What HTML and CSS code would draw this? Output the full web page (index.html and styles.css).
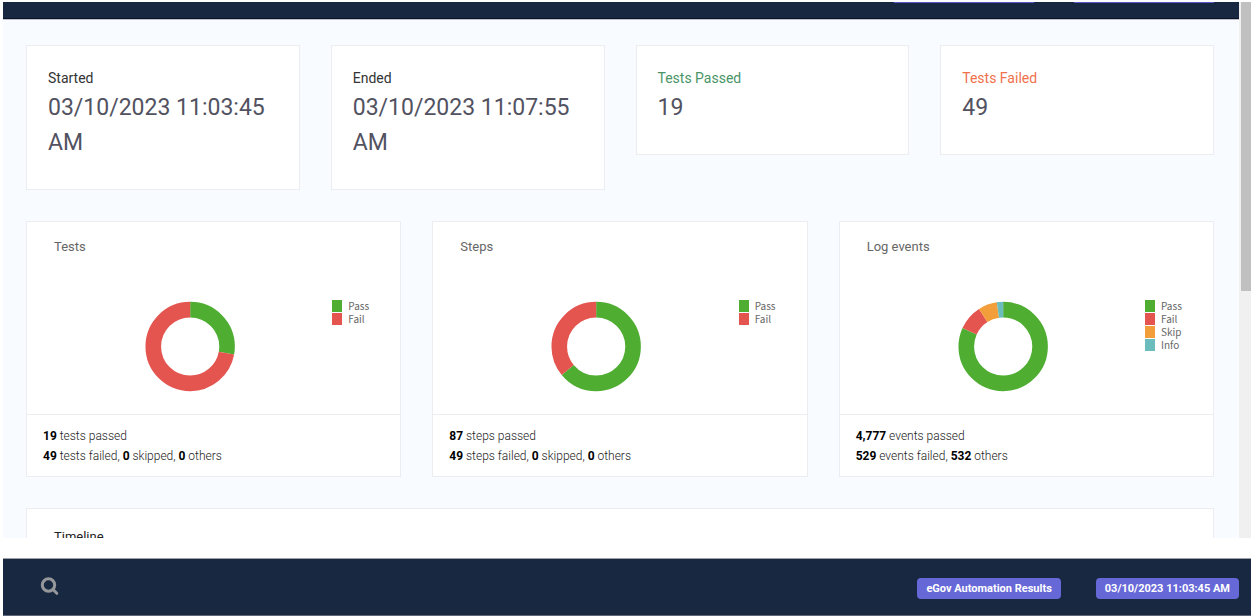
FILE: index.html
```html
<!DOCTYPE html>
<html lang="en">
<head>
<meta charset="utf-8">
<title>eGov Automation Results</title>
<link rel="stylesheet" href="styles.css">
</head>
<body>
<div class="report">
  <div class="report-main">
    <div class="topbar">
      <span class="topbar-pill"></span>
      <span class="topbar-pill"></span>
    </div>
    <main class="content">
      <section class="stats">
        <article class="card stat"><h2 class="stat-label">Started</h2><p class="stat-value">03/10/2023 11:03:45 AM</p></article>
        <article class="card stat"><h2 class="stat-label">Ended</h2><p class="stat-value">03/10/2023 11:07:55 AM</p></article>
        <article class="card stat"><h2 class="stat-label is-pass">Tests Passed</h2><p class="stat-value">19</p></article>
        <article class="card stat"><h2 class="stat-label is-fail">Tests Failed</h2><p class="stat-value">49</p></article>
      </section>
      <section class="charts">
        <article class="card">
          <h2 class="card-title">Tests</h2>
          <div class="chart">
            <svg class="donut" viewBox="0 0 93 93" role="img" aria-label="Tests by status">
              <g transform="rotate(-90 46.5 46.5)">
                <circle class="slice pass" cx="46.5" cy="46.5" r="36.9" pathLength="100" stroke-dasharray="27.9 72.1"/>
                <circle class="slice fail" cx="46.5" cy="46.5" r="36.9" pathLength="100" stroke-dasharray="72.1 27.9" stroke-dashoffset="-27.9"/>
              </g>
            </svg>
            <ul class="legend">
              <li class="legend-item pass">Pass</li>
              <li class="legend-item fail">Fail</li>
            </ul>
          </div>
          <footer class="card-footer">
            <p><b>19</b> tests passed</p>
            <p><b>49</b> tests failed, <b>0</b> skipped, <b>0</b> others</p>
          </footer>
        </article>
        <article class="card">
          <h2 class="card-title">Steps</h2>
          <div class="chart">
            <svg class="donut" viewBox="0 0 93 93" role="img" aria-label="Steps by status">
              <g transform="rotate(-90 46.5 46.5)">
                <circle class="slice pass" cx="46.5" cy="46.5" r="36.9" pathLength="100" stroke-dasharray="64 36"/>
                <circle class="slice fail" cx="46.5" cy="46.5" r="36.9" pathLength="100" stroke-dasharray="36 64" stroke-dashoffset="-64"/>
              </g>
            </svg>
            <ul class="legend">
              <li class="legend-item pass">Pass</li>
              <li class="legend-item fail">Fail</li>
            </ul>
          </div>
          <footer class="card-footer">
            <p><b>87</b> steps passed</p>
            <p><b>49</b> steps failed, <b>0</b> skipped, <b>0</b> others</p>
          </footer>
        </article>
        <article class="card">
          <h2 class="card-title">Log events</h2>
          <div class="chart">
            <svg class="donut" viewBox="0 0 93 93" role="img" aria-label="Log events by status">
              <g transform="rotate(-90 46.5 46.5)">
                <circle class="slice pass" cx="46.5" cy="46.5" r="36.9" pathLength="100" stroke-dasharray="81.8 18.2"/>
                <circle class="slice fail" cx="46.5" cy="46.5" r="36.9" pathLength="100" stroke-dasharray="9.1 90.9" stroke-dashoffset="-81.8"/>
                <circle class="slice skip" cx="46.5" cy="46.5" r="36.9" pathLength="100" stroke-dasharray="6.8 93.2" stroke-dashoffset="-90.9"/>
                <circle class="slice info" cx="46.5" cy="46.5" r="36.9" pathLength="100" stroke-dasharray="2.3 97.7" stroke-dashoffset="-97.7"/>
              </g>
            </svg>
            <ul class="legend">
              <li class="legend-item pass">Pass</li>
              <li class="legend-item fail">Fail</li>
              <li class="legend-item skip">Skip</li>
              <li class="legend-item info">Info</li>
            </ul>
          </div>
          <footer class="card-footer">
            <p><b>4,777</b> events passed</p>
            <p><b>529</b> events failed, <b>532</b> others</p>
          </footer>
        </article>
      </section>
      <section class="card timeline">
        <h2 class="card-title">Timeline</h2>
      </section>
    </main>
  </div>
  <div class="scrollbar"><div class="scrollbar-thumb"></div></div>
</div>
<nav class="navbar">
  <button class="search" type="button" aria-label="Search">
    <svg class="search-icon" viewBox="0 0 20 22" aria-hidden="true">
      <circle cx="8.5" cy="8" r="6.2"/>
      <path d="M13 12.5 L16.8 16.3"/>
    </svg>
  </button>
  <div class="badges">
    <span class="badge">eGov Automation Results</span>
    <span class="badge">03/10/2023 11:03:45 AM</span>
  </div>
</nav>
</body>
</html>
```

FILE: styles.css
```css
* {
  box-sizing: border-box;
}

body {
  display: flex;
  flex-direction: column;
  gap: 20px;
  height: 100vh;
  margin: 0;
  padding: 2px 7px 0 3px;
  background: #fff;
  color: #222;
  font-family: Roboto, "Liberation Sans", sans-serif;
}

h2, p, ul {
  margin: 0;
  padding: 0;
  font-weight: 400;
}

.report {
  display: flex;
  flex: 1;
  min-height: 0;
  overflow: hidden;
}

.report-main {
  flex: 1;
  overflow: hidden;
  background: #f8fbff;
}

.topbar {
  display: flex;
  justify-content: flex-end;
  gap: 40px;
  height: 18px;
  padding-right: 25px;
  background: #182841;
  border-bottom: 1px solid #bfc0c8;
  box-shadow: inset 0 -1px #07132b;
}

.topbar-pill {
  width: 140px;
  height: 1px;
  background: #5a58cc;
}

.content {
  display: flex;
  flex-direction: column;
  gap: 31px;
  padding: 25px 25px 0 23px;
}

.stats, .charts {
  display: grid;
  gap: 31px;
}

.stats {
  grid-template-columns: repeat(4, 1fr);
  align-items: start;
}

.charts {
  grid-template-columns: repeat(3, 1fr);
}

.card {
  background: #fff;
  border: 1px solid #ecedf0;
}

.stat {
  padding: 22px 21px 29px;
}

.stat-label {
  margin-bottom: 2px;
  color: #333;
  font-size: 14px;
  line-height: 20px;
}

.stat-label.is-pass {
  color: #4a9567;
}

.stat-label.is-fail {
  color: #f0714c;
}

.stat-value {
  color: #525261;
  font-size: 23px;
  line-height: 35px;
}

.card-title {
  padding: 15px 27px 0;
  color: #666;
  font-size: 13px;
  line-height: 20px;
}

.chart {
  display: flex;
  align-items: flex-start;
  padding: 43px 30px 21px 21px;
}

.donut {
  flex: 1;
  height: 93px;
}

.slice {
  fill: none;
  stroke: var(--status);
  stroke-width: 15.6;
}

.pass {
  --status: #4fad32;
}

.fail {
  --status: #e45550;
}

.skip {
  --status: #f29f3b;
}

.info {
  --status: #6bbcbd;
}

.legend {
  width: 38px;
  list-style: none;
  color: #666;
  font-family: "Noto Sans CJK SC", "Noto Sans", sans-serif;
  font-size: 10px;
  line-height: 12px;
}

.legend-item {
  display: flex;
  align-items: flex-start;
  gap: 6px;
  height: 13px;
}

.legend-item::before {
  content: "";
  flex: none;
  width: 10px;
  height: 12px;
  background: var(--status);
}

.card-footer {
  padding: 11px 16px 10px;
  border-top: 1px solid #ecedf0;
  font-size: 12px;
  line-height: 20px;
}

.card-footer p {
  font-weight: 300;
}

.card-footer b {
  color: #000;
  font-weight: 700;
}

.timeline {
  padding: 3px 0 40px;
}

.timeline .card-title {
  color: #222;
}

.scrollbar {
  width: 12px;
  padding-left: 2px;
  background: #f0f0f0;
}

.scrollbar-thumb {
  height: 54%;
  background: #c0c0c0;
}

.navbar {
  display: flex;
  align-items: center;
  justify-content: space-between;
  height: 58px;
  padding: 2px 12px 0 37px;
  background: #182841;
  border-top: 1px solid #a0a0a4;
  border-bottom: 1px solid #5d6678;
}

.search {
  display: flex;
  padding: 0;
  border: 0;
  background: none;
}

.search-icon {
  width: 20px;
  height: 22px;
  fill: none;
  stroke: #96979b;
  stroke-width: 3;
  stroke-linecap: round;
}

.badges {
  display: flex;
  gap: 35px;
}

.badge {
  padding: 0 9px;
  border-radius: 4px;
  background: #6768d8;
  color: #fff;
  font-size: 11px;
  font-weight: 700;
  line-height: 21px;
}
```
